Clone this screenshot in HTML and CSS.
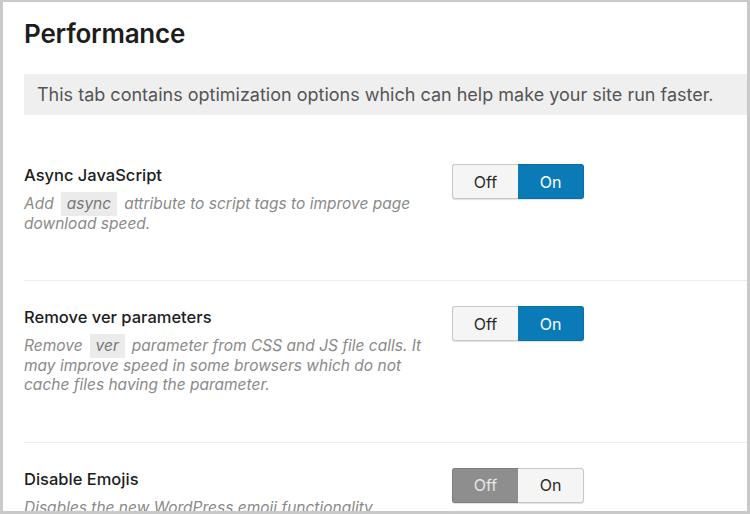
FILE: index.html
```html
<!DOCTYPE html>
<html lang="en">
<head>
  <meta charset="UTF-8">
  <meta name="viewport" content="width=device-width, initial-scale=1.0">
  <title>Performance</title>
  <link rel="stylesheet" href="styles.css">
</head>
<body>
  <div class="frame">
    <div class="panel">
      <h1>Performance</h1>

      <div class="notice">This tab contains optimization options which can help make your site run faster.</div>

      <div class="option">
        <div class="option-text">
          <h3>Async JavaScript</h3>
          <p class="desc">Add<code>async</code>attribute to script tags to improve page download speed.</p>
        </div>
        <div class="toggle">
          <span class="toggle-off">Off</span>
          <span class="toggle-on active">On</span>
        </div>
      </div>

      <div class="option">
        <div class="option-text">
          <h3>Remove ver parameters</h3>
          <p class="desc">Remove<code>ver</code>parameter from CSS and JS file calls. It may improve speed in some browsers which do not cache files having the parameter.</p>
        </div>
        <div class="toggle">
          <span class="toggle-off">Off</span>
          <span class="toggle-on active">On</span>
        </div>
      </div>

      <div class="option">
        <div class="option-text">
          <h3>Disable Emojis</h3>
          <p class="desc">Disables the new WordPress emoji functionality.</p>
        </div>
        <div class="toggle">
          <span class="toggle-off active">Off</span>
          <span class="toggle-on">On</span>
        </div>
      </div>
    </div>
  </div>
</body>
</html>
```

FILE: styles.css
```css
:root {
  --frame-color: #c9c9c9;
  --text-color: #1d1d1d;
  --muted-color: #8a8a8a;
  --notice-bg: #efefef;
  --line-color: #ececec;
  --blue: #0b7bb7;
  --off-bg: #f5f5f5;
  --off-border: #c8c8c8;
  --grey-active: #8e8e8e;
}

* {
  box-sizing: border-box;
}

body {
  margin: 0;
  font-family: Inter, "Noto Sans", Arial, sans-serif;
  color: var(--text-color);
  background: #fff;
}

.frame {
  width: 750px;
  height: 514px;
  border: solid var(--frame-color);
  border-width: 2px 3px 3px 3px;
  overflow: hidden;
}

.panel {
  padding: 16px 0 0 21px;
}

h1 {
  margin: 0 0 24px;
  font-size: 26px;
  font-weight: 600;
  line-height: 32px;
  letter-spacing: -0.2px;
}

.notice {
  background: var(--notice-bg);
  padding: 9px 13px;
  font-size: 18px;
  line-height: 23px;
  color: #555;
  white-space: nowrap;
}

.option {
  display: grid;
  grid-template-columns: 428px auto;
  align-items: start;
  padding: 49px 0 47px;
  border-bottom: 1px solid var(--line-color);
}

.option + .option {
  padding-top: 25px;
}

.option h3 {
  margin: 0 0 8px;
  font-size: 16.5px;
  font-weight: 500;
  line-height: 22px;
}

.desc {
  margin: 0;
  width: 404px;
  font-size: 15.5px;
  line-height: 19.5px;
  font-style: italic;
  color: var(--muted-color);
}

code {
  display: inline-block;
  font-family: inherit;
  background: #ebebeb;
  padding: 2px 6px;
  margin: -2px 7px -2px 7px;
  color: #777;
}

.toggle {
  display: flex;
  width: 132px;
  height: 35px;
  border-radius: 3px;
  box-shadow: 0 1px 1px rgba(0, 0, 0, 0.12);
}

.toggle span {
  flex: 1;
  display: flex;
  align-items: center;
  justify-content: center;
  font-size: 16px;
  background: var(--off-bg);
  border: 1px solid var(--off-border);
  color: #2a2a2a;
}

.toggle-off {
  border-radius: 3px 0 0 3px;
  border-right: none !important;
}

.toggle-on {
  border-radius: 0 3px 3px 0;
  border-left: none !important;
}

.toggle-on.active {
  background: var(--blue);
  border-color: #0a6da3;
  color: #fff;
}

.toggle-off.active {
  background: var(--grey-active);
  border-color: #7d7d7d;
  color: #e6e6e6;
}
```
